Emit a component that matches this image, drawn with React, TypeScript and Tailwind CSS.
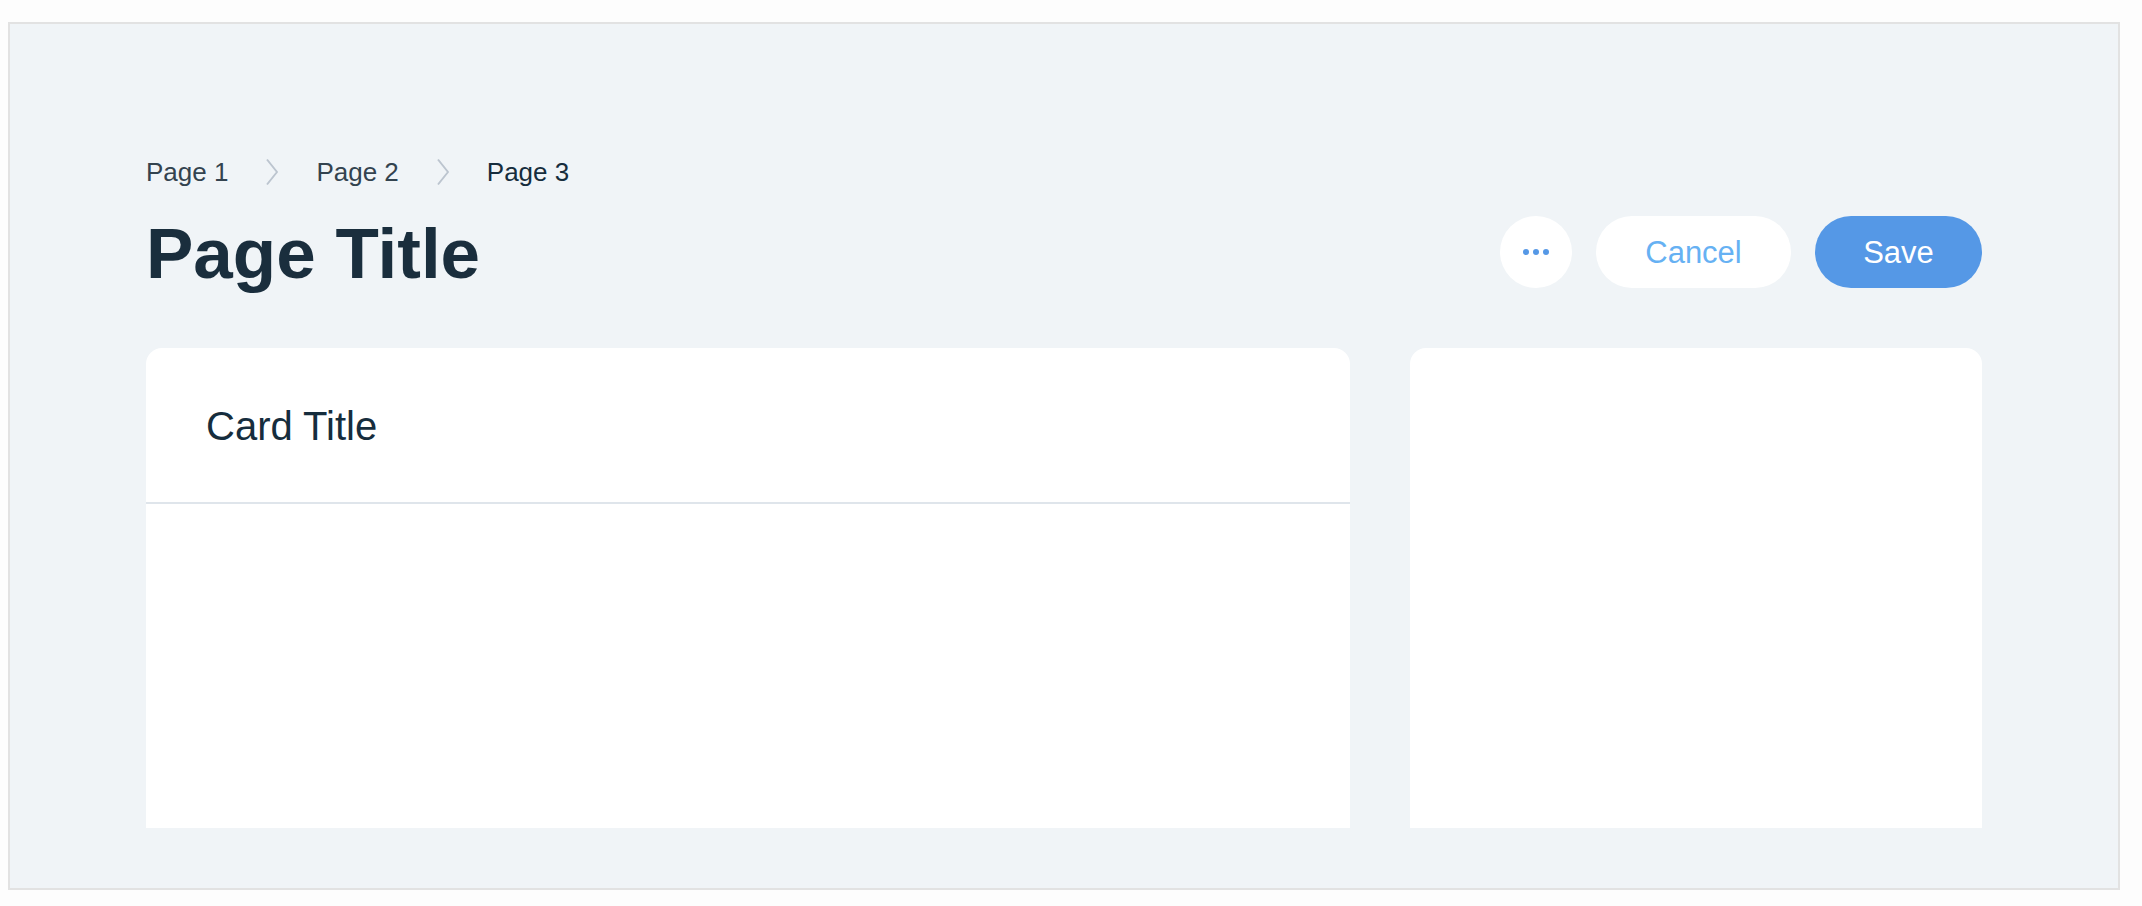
import { ReactNode } from 'react';

const font = { fontFamily: '"Liberation Sans", Arial, sans-serif' };

function Chevron() {
  return (
    <svg width="14" height="28" viewBox="0 0 14 28" fill="none" className="shrink-0">
      <path d="M2 1.5 L12 14 L2 26.5" stroke="#bcc5cf" strokeWidth="2" strokeLinejoin="round" />
    </svg>
  );
}

function Breadcrumbs({ items }: { items: string[] }) {
  return (
    <div className="flex h-[40px] items-center gap-[37px] text-[26px] leading-none">
      {items.map((item, i) => {
        const last = i === items.length - 1;
        return (
          <div key={item} className="flex items-center gap-[37px]">
            <span className={last ? 'text-[#162d3d]' : 'text-[#33434f]'}>{item}</span>
            {!last && <Chevron />}
          </div>
        );
      })}
    </div>
  );
}

function PillButton({ children, className }: { children: ReactNode; className: string }) {
  return (
    <button className={`flex h-[72px] items-center justify-center rounded-full text-[31px] leading-none ${className}`}>
      {children}
    </button>
  );
}

export default function App() {
  return (
    <div className="h-[906px] w-full bg-[#fdfdfd] pl-[8px] pt-[22px]" style={font}>
      {/* page frame */}
      <div className="flex h-[868px] w-[2112px] flex-col overflow-hidden border-2 border-[#e2e2e2] bg-[#f0f4f7] px-[136px] pb-[60px] pt-[128px]">
        <Breadcrumbs items={['Page 1', 'Page 2', 'Page 3']} />

        {/* header row */}
        <div className="mt-[24px] flex h-[72px] items-center justify-between">
          <h1 className="pt-[2px] text-[71px] font-bold leading-none text-[#1a2e3d]">Page Title</h1>
          <div className="flex items-center gap-[24px]">
            <PillButton className="w-[72px] bg-white">
              <span className="flex gap-[4px]">
                <span className="h-[6px] w-[6px] rounded-full bg-[#5598e6]" />
                <span className="h-[6px] w-[6px] rounded-full bg-[#5598e6]" />
                <span className="h-[6px] w-[6px] rounded-full bg-[#5598e6]" />
              </span>
            </PillButton>
            <PillButton className="w-[195px] bg-white text-[#66b1f3]">Cancel</PillButton>
            <PillButton className="w-[167px] bg-[#5598e6] text-white">Save</PillButton>
          </div>
        </div>

        {/* cards */}
        <div className="mt-[60px] grid min-h-0 flex-1 grid-cols-12 gap-[60px]">
          <div className="col-span-8 flex flex-col rounded-t-[16px] bg-white">
            <div className="flex h-[156px] items-center border-b-2 border-[#dfe5eb] px-[60px] pt-[2px]">
              <h2 className="text-[40px] leading-none text-[#162d3d]">Card Title</h2>
            </div>
          </div>
          <div className="col-span-4 rounded-t-[16px] bg-white" />
        </div>
      </div>
    </div>
  );
}
